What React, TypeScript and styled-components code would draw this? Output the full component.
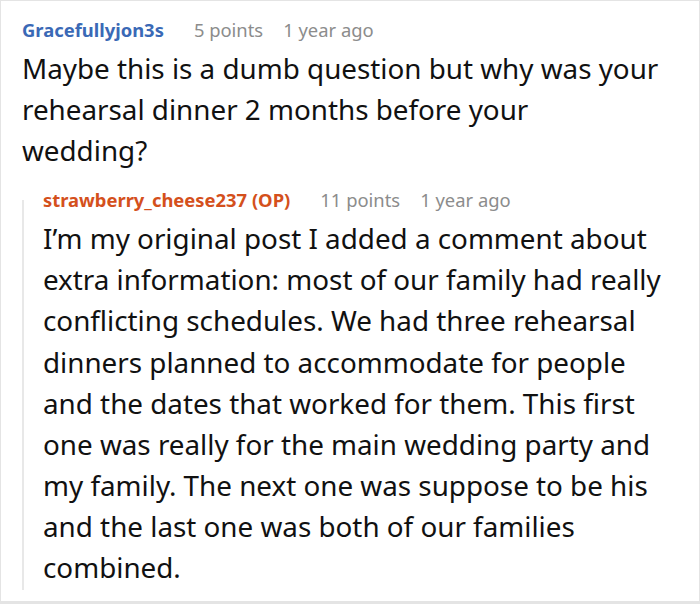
import styled, {createGlobalStyle} from "styled-components"

const GlobalStyle = createGlobalStyle`
    html, body {
        margin: 0;
        padding: 0;
        background: #ffffff;
    }
`

const Frame = styled.div`
    width: 700px;
    height: 604px;
    box-sizing: border-box;
    border: 1px solid #e4e4e4;
    border-bottom-width: 3px;
    overflow: hidden;
    padding: 15px 0 0 21px;
    font-family: "Noto Sans", "Open Sans", sans-serif;
    color: #111111;
`

const Comment = styled.div`
    display: flex;
    flex-direction: column;
`

// nested reply, grey thread line on the left
const Reply = styled(Comment)`
    position: relative;
    margin-top: 15px;
    padding-left: 21px;

    &::before {
        content: "";
        position: absolute;
        left: 0;
        top: 14px;
        bottom: -2px;
        width: 2px;
        background: #e8e8e8;
    }
`

const Meta = styled.div`
    display: flex;
    align-items: baseline;
    height: 28px;
    margin-bottom: 4px;
    font-size: 18.4px;
    line-height: 28px;
    white-space: nowrap;
`

const Author = styled.span<{ $color: string }>`
    font-weight: bold;
    color: ${props => props.$color};
    margin-right: 30px;
`

const Faint = styled.span`
    color: #8c8c8c;
    margin-right: 20px;
`

const Body = styled.div`
    font-size: 27.8px;
    line-height: 41.1px;
    white-space: nowrap;
`

function App() {
    return (
        <Frame>
            <GlobalStyle/>
            <Comment>
                <Meta>
                    <Author $color="#3a69b6">Gracefullyjon3s</Author>
                    <Faint>5 points</Faint>
                    <Faint>1 year ago</Faint>
                </Meta>
                <Body>
                    Maybe this is a dumb question but why was your<br/>
                    rehearsal dinner 2 months before your<br/>
                    wedding?
                </Body>
            </Comment>
            <Reply>
                <Meta>
                    <Author $color="#d4501c">strawberry_cheese237 (OP)</Author>
                    <Faint>11 points</Faint>
                    <Faint>1 year ago</Faint>
                </Meta>
                <Body>
                    I’m my original post I added a comment about<br/>
                    extra information: most of our family had really<br/>
                    conflicting schedules. We had three rehearsal<br/>
                    dinners planned to accommodate for people<br/>
                    and the dates that worked for them. This first<br/>
                    one was really for the main wedding party and<br/>
                    my family. The next one was suppose to be his<br/>
                    and the last one was both of our families<br/>
                    combined.
                </Body>
            </Reply>
        </Frame>
    )
}

export default App
